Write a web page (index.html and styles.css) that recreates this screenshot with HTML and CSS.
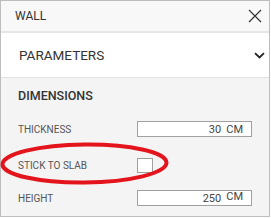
FILE: index.html
```html
<!DOCTYPE html>
<html>
<head>
<meta charset="utf-8">
<link rel="stylesheet" href="styles.css">
</head>
<body>
<div class="panel">
  <div class="header">
    <span class="title">WALL</span>
    <svg class="close" width="14" height="14" viewBox="0 0 14 14"><path d="M1 1L13 13M13 1L1 13" stroke="#333" stroke-width="1.2" fill="none"/></svg>
  </div>
  <div class="accordion">
    <span class="acc-title">PARAMETERS</span>
    <svg class="chevron" width="11" height="7" viewBox="0 0 11 7"><path d="M1 1.2L5.5 5.5L10 1.2" stroke="#222" stroke-width="1.8" fill="none"/></svg>
  </div>
  <div class="section">
    <div class="section-title">DIMENSIONS</div>
    <div class="rows">
      <div class="row">
        <span class="label">THICKNESS</span>
        <div class="field"><span class="value">30</span><span class="unit">CM</span></div>
      </div>
      <div class="row row-check">
        <span class="label">STICK TO SLAB</span>
        <div class="checkbox"></div>
      </div>
      <div class="row row-height">
        <span class="label">HEIGHT</span>
        <div class="field"><span class="value">250</span><span class="unit unit-raised">CM</span></div>
      </div>
    </div>
  </div>
  <svg class="annotation" width="270" height="217" viewBox="0 0 270 217"><ellipse cx="84.5" cy="163.5" rx="82" ry="19" fill="none" stroke="#e3141c" stroke-width="4" transform="rotate(-0.6 84.5 163.5)"/></svg>
</div>
</body>
</html>
```
FILE: styles.css
```css
* { box-sizing: border-box; }
body { margin: 0; background: #ffffff; font-family: Roboto, "Liberation Sans", sans-serif; }
.panel {
  position: relative;
  width: 270px;
  height: 217px;
  border: 1px solid #bdbdbd;
  background: #f4f4f4;
  display: flex;
  flex-direction: column;
}
.header {
  height: 32px;
  flex: none;
  background: #f8f8f8;
  border-bottom: 2px solid #e6e6e6;
  display: flex;
  align-items: center;
  justify-content: space-between;
  padding: 0 7px 0 14px;
}
.title { font-size: 12px; color: #333; }
.close { display: block; }
.accordion {
  height: 45px;
  flex: none;
  background: #ffffff;
  border-bottom: 1px solid #e2e2e2;
  display: flex;
  align-items: center;
  justify-content: space-between;
  padding: 0 4px 0 18px;
}
.acc-title { font-size: 13.5px; color: #333; }
.chevron { display: block; }
.section { padding: 10px 0 0 17px; }
.section-title { font-size: 12.5px; font-weight: 500; color: #333; height: 16px; line-height: 16px; }
.rows { display: flex; flex-direction: column; margin-top: 17px; }
.row { display: flex; align-items: center; height: 16px; }
.row-check { margin-top: 20px; }
.row-height { margin-top: 17px; }
.label { width: 119px; font-size: 10px; color: #555; }
.field {
  width: 115px;
  height: 16px;
  background: #fff;
  border: 1px solid #a0a0a0;
  display: flex;
  align-items: center;
  justify-content: flex-end;
  padding-right: 8px;
  font-size: 11px;
  color: #444;
}
.value { margin-right: 5px; }
.unit-raised { position: relative; top: -2px; }
.checkbox {
  width: 16px;
  height: 15px;
  background: #fff;
  border: 1px solid #a0a0a0;
}
.annotation { position: absolute; left: -1px; top: -1px; pointer-events: none; }
```
